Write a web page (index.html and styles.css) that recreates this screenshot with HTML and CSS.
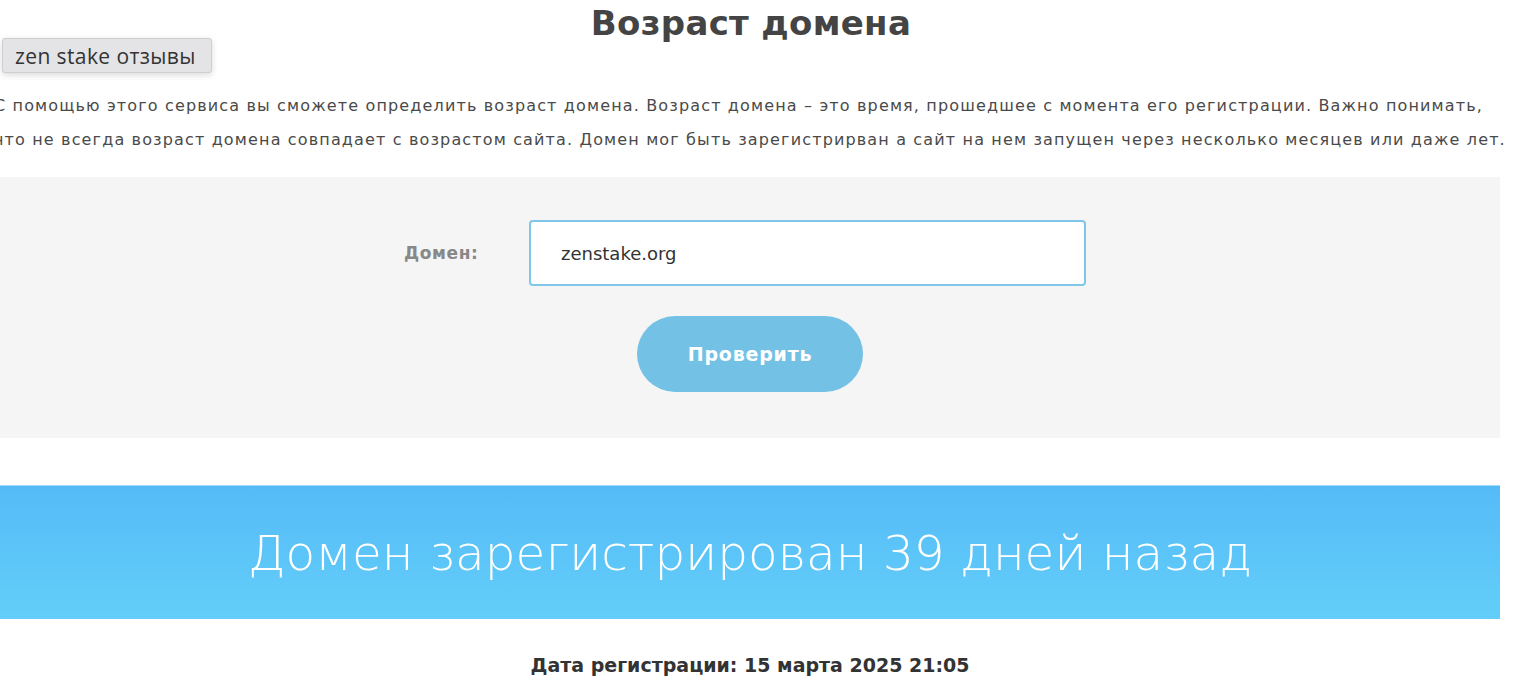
FILE: index.html
```html
<!DOCTYPE html>
<html lang="ru">
<head>
<meta charset="utf-8">
<title>Возраст домена</title>
<link rel="stylesheet" href="styles.css">
</head>
<body>
<div class="page">
  <h1 class="title">Возраст домена</h1>
  <p class="intro">С помощью этого сервиса вы сможете определить возраст домена. Возраст домена – это время, прошедшее с момента его регистрации. Важно понимать,<br>что не всегда возраст домена совпадает с возрастом сайта. Домен мог быть зарегистрирван а сайт на нем запущен через несколько месяцев или даже лет.</p>
  <form class="panel">
    <div class="field">
      <label class="label" for="domain">Домен:</label>
      <div class="input">zenstake.org</div>
    </div>
    <button class="btn" type="button">Проверить</button>
  </form>
  <div class="banner">Домен зарегистрирован 39 дней назад</div>
  <p class="date">Дата регистрации: 15 марта 2025 21:05</p>
</div>
<div class="tip">zen stake отзывы</div>
</body>
</html>
```
FILE: styles.css
```css
html, body { margin: 0; padding: 0; background: #fff; }
body { font-family: "DejaVu Sans", "Open Sans", sans-serif; overflow: hidden; }
.page { width: 1500px; }
.title {
  margin: 0; padding-top: 3px; height: 44px;
  text-align: center; font-size: 34px; font-weight: 700; color: #444;
  line-height: 40px; padding-left: 2px; letter-spacing: 0.3px;
}
.intro {
  margin: 42px 0 0 -6px; width: 1510px;
  font-size: 16px; letter-spacing: 1.15px; line-height: 34px; color: #4a4a4a; font-weight: 400;
  white-space: nowrap;
}
.panel {
  margin-top: 20px; height: 261px; background: #f4f5f4;
  display: flex; flex-direction: column; align-items: center;
  padding-top: 43px; box-sizing: border-box;
}
.field { display: flex; align-items: center; margin-left: -10px; }
.label { width: 125px; font-size: 17px; letter-spacing: 0.6px; font-weight: 700; color: #888; }
.input {
  width: 557px; height: 66px; box-sizing: border-box;
  border: 2px solid #7fc6ea; border-radius: 4px; background: #fff;
  padding-left: 30px; display: flex; align-items: center;
  font-size: 18px; color: #333;
}
.btn {
  margin-top: 30px; width: 226px; height: 76px; border: 0; border-radius: 38px;
  background: #74c1e6; color: #fff; font-family: inherit;
  font-size: 19px; letter-spacing: 0.8px; font-weight: 700;
}
.banner {
  margin-top: 47px; height: 134px;
  background: linear-gradient(#55bbf7, #63cef9);
  border-top: 1px solid #9fd8fb; box-sizing: border-box;
  display: flex; align-items: center; justify-content: center;
  color: #fff; font-family: "DejaVu Sans", sans-serif; font-weight: 200; font-size: 48.5px;
}
.date {
  margin: 35px 0 0; text-align: center; font-size: 19px; font-weight: 700; color: #333;
}
.tip {
  position: absolute; left: 2px; top: 38px; width: 210px; height: 35px;
  box-sizing: border-box; border: 1px solid #cfcfd2; border-radius: 3px;
  background: #e4e4e7; box-shadow: 0 2px 6px rgba(0,0,0,0.15);
  font-family: "Open Sans", Arial, sans-serif; font-size: 21px; letter-spacing: 0.4px; color: #333;
  display: flex; align-items: center; padding-left: 12px;
}
```
